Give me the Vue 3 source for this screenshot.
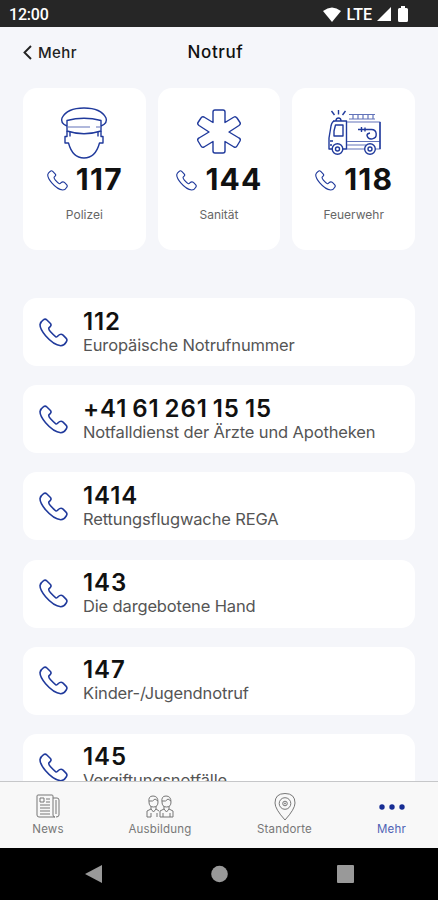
<template>
  <div class="screen">
    <div class="status-bar">
      <span class="time">12:00</span>
      <div class="status-icons">
        <svg class="wifi" width="18" height="15" viewBox="0 0 18 15">
          <path d="M0 4Q9-3 18 4L9 15z" fill="#fff" />
        </svg>
        <span class="lte">LTE</span>
        <svg class="signal" width="14" height="14" viewBox="0 0 14 14">
          <path d="M14 0v14H0z" fill="#fff" />
        </svg>
        <svg width="10" height="16" viewBox="0 0 10 16">
          <path d="M3 0h4v2h1.5Q10 2 10 3.500V14.500Q10 16 8.500 16h-7Q0 16 0 14.500v-11Q0 2 1.500 2H3z" fill="#fff" />
        </svg>
      </div>
    </div>

    <header class="header">
      <button class="back">
        <svg width="9" height="15" viewBox="0 0 9 15">
          <path d="M8 1L1.500 7.500L8 14" fill="none" stroke="#222" stroke-width="1.900" />
        </svg>
        <span>Mehr</span>
      </button>
      <h1>Notruf</h1>
    </header>

    <main class="content">
      <div class="cards">
        <div v-for="card in cards" :key="card.number" class="card">
          <svg v-if="card.icon === 'police'" class="card-icon" width="54" height="54" viewBox="0 0 54 54">
            <path d="M10 21Q3 18 5 13Q10 3 27 3T49 13Q51 18 44 21" />
            <path d="M10 15.500Q27 11 44 15.500V26Q27 31.500 10 26z" />
            <path class="thin" d="M11 22H33M39 22H43" />
            <path d="M10 26V31.500H8V38H11.500Q15.500 53 27 53T42.500 38H46V31.500H44V26" />
            <path d="M13 27V31.500M41 27V31.500" />
          </svg>
          <svg v-else-if="card.icon === 'medical'" class="card-icon" width="54" height="54" viewBox="0 0 54 54">
            <path
              d="M23 5H31Q33 5 33 7V17.500L42 12Q43.500 11 45 13L48 17.500Q49 19 47 20.500L37 27L47 33Q49 34 48 36L45 41Q44 43 42 42L33 36.500V46Q33 48 31 48H23Q21 48 21 46V36.500L12 42Q10 43 9 41L6 36Q5 34 7 33L17 27L7 20.500Q5 19 6 17.500L9 13Q10 11 12 12L21 17.500V7Q21 5 23 5z"
            />
          </svg>
          <svg v-else class="card-icon" width="54" height="54" viewBox="0 0 54 54">
            <path d="M11.500 5V9.500M4.500 6L7.500 10M18.500 6L15.500 10M9 16Q9 13 11.500 13T14 16" />
            <path d="M6 16H19.500V44H15.500M5 44H2V33L4 21Q5 16 8 16M8.500 20H16V31H7V26zM3 36H6M3 40H5" />
            <path class="thin" d="M20 17H53V44H48.500M37.500 44H20M20 36.500H53M20 40H39M22 9.500H48M22 14H48M26 10V14M31 10V14M36 10V14M41 10V14M46 10V14" />
            <path d="M53 17V44M31 24.500H44.500A4.700 4.700 0 1 1 40 30.500Q40 28.500 43 28M34.500 22V27M38 22.500V26.500" />
            <circle cx="10.500" cy="44" r="5.300" />
            <circle cx="10.500" cy="44" r="2" />
            <circle cx="43" cy="44" r="5.300" />
            <circle cx="43" cy="44" r="2" />
          </svg>
          <div class="card-number">
            <svg class="phone" width="21" height="21" viewBox="0 0 88 88">
              <path :d="phonePath" />
            </svg>
            <span>{{ card.number }}</span>
          </div>
          <div class="card-label">{{ card.label }}</div>
        </div>
      </div>

      <div class="list">
        <div v-for="item in contacts" :key="item.number" class="row">
          <svg class="phone" width="29" height="29" viewBox="0 0 88 88">
            <path :d="phonePath" />
          </svg>
          <div>
            <div class="row-number">{{ item.number }}</div>
            <div class="row-label">{{ item.label }}</div>
          </div>
        </div>
      </div>
    </main>

    <nav class="tabs">
      <div class="tab news">
        <svg width="25" height="28" viewBox="0 0 25 28">
          <path d="M1 3Q1 2 2 2H16Q17 2 17 3V22Q17 24 19 24H3Q1 24 1 22zM17 5H21Q23 5 23 7V22Q23 24 20 24M20 7V21M4 5H8V9H4zM10 6H14M10 9H14M4 12H14M4 15H14M4 18H14M4 21H14" />
        </svg>
        <span>News</span>
      </div>
      <div class="tab ausbildung">
        <svg width="28" height="28" viewBox="0 0 28 28">
          <path d="M3 9Q2 3 7 3T12 9Q12 14 7.500 14T3 9M3 8Q7 9 9 6L12 8M5 13V16L1 18V24H5M10 13V16L13 18M5 16L7.500 19L10 16M5 24V20M11 24V20M16 9Q15 3 20 3T25 9Q25 14 20.500 14T16 9M16 8Q20 9 22 6L25 8M18 13V16L14 18V24H27V18L23 16V13M18 16L20.500 19L23 16M17 24V20M24 24V20" />
        </svg>
        <span>Ausbildung</span>
      </div>
      <div class="tab standorte">
        <svg width="22" height="28" viewBox="0 0 22 28">
          <path d="M11 27Q1 16 1 10Q1 .5 11 .5T21 10Q21 16 11 27z" />
          <circle cx="11" cy="10.500" r="5.800" />
          <circle cx="11" cy="10.500" r="2.300" />
          <circle cx="11" cy="10.500" r=".6" />
        </svg>
        <span>Standorte</span>
      </div>
      <div class="tab mehr active">
        <svg width="28" height="28" viewBox="0 0 28 28">
          <circle cx="4" cy="14" r="2.700" />
          <circle cx="14" cy="14" r="2.700" />
          <circle cx="24" cy="14" r="2.700" />
        </svg>
        <span>Mehr</span>
      </div>
    </nav>

    <div class="system-nav">
      <svg width="17" height="18" viewBox="0 0 17 18"><path d="M17 0V18L0 9z" /></svg>
      <svg width="17" height="18" viewBox="0 0 17 18"><circle cx="8.500" cy="9" r="8.300" /></svg>
      <svg width="17" height="18" viewBox="0 0 17 18"><rect width="17" height="18" rx="1" /></svg>
    </div>
  </div>
</template>

<script setup>
import { ref } from 'vue'

const phonePath =
  'M14 5Q19 1 24 6L34 16Q39 21 34 26L30 30Q28 34 35 42Q44 52 51 57Q54 59 58 54Q66 46 73 52L82 61Q87 66 83 72Q76 84 66 84Q44 82 20 54Q3 34 3 20Q4 12 14 5z'

const cards = ref([
  { icon: 'police', number: '117', label: 'Polizei' },
  { icon: 'medical', number: '144', label: 'Sanität' },
  { icon: 'fire', number: '118', label: 'Feuerwehr' }
])

const contacts = ref([
  { number: '112', label: 'Europäische Notrufnummer' },
  { number: '+41 61 261 15 15', label: 'Notfalldienst der Ärzte und Apotheken' },
  { number: '1414', label: 'Rettungsflugwache REGA' },
  { number: '143', label: 'Die dargebotene Hand' },
  { number: '147', label: 'Kinder-/Jugendnotruf' },
  { number: '145', label: 'Vergiftungsnotfälle' }
])
</script>

<style>
body {
  margin: 0;
}
</style>

<style scoped>
.screen {
  width: 438px;
  height: 900px;
  display: flex;
  flex-direction: column;
  overflow: hidden;
  background: #f5f6fa;
  color: #111;
  font-family: Inter, 'Liberation Sans', sans-serif;
}

.status-bar {
  height: 27px;
  flex: none;
  display: flex;
  align-items: center;
  justify-content: space-between;
  box-sizing: border-box;
  padding: 1px 30px 0 9px;
  background: #262626;
  color: #fff;
  font-family: Roboto, sans-serif;
  font-size: 16px;
  font-weight: 500;
}

.time {
  letter-spacing: -0.2px;
}

.status-icons {
  display: flex;
  align-items: center;
}

.wifi {
  margin-right: 6px;
}

.lte {
  margin-right: 5px;
}

.signal {
  margin-right: 7px;
}

.header {
  height: 61px;
  flex: none;
  display: grid;
  grid-template-columns: 1fr auto 1fr;
  align-items: center;
  box-sizing: border-box;
  padding: 0 30px 11px 23px;
}

.back {
  display: flex;
  align-items: center;
  gap: 6px;
  padding: 0;
  border: none;
  background: none;
  color: #222;
  font: 500 15px Inter, sans-serif;
  letter-spacing: 0.4px;
}

h1 {
  margin: 0;
  font-size: 17px;
  font-weight: 500;
  letter-spacing: 0.6px;
}

.content {
  flex: 1;
  min-height: 0;
  overflow: hidden;
  padding: 0 23px;
}

.cards {
  display: grid;
  grid-template-columns: repeat(3, 1fr);
  gap: 12px;
  margin-bottom: 48px;
}

.card {
  height: 162px;
  display: flex;
  flex-direction: column;
  align-items: center;
  box-sizing: border-box;
  padding-top: 17px;
  border-radius: 14px;
  background: #fff;
}

.card-icon,
.phone {
  flex: none;
  fill: none;
  stroke: #203a9c;
  stroke-width: 1.4;
  stroke-linejoin: round;
}

.phone {
  stroke-width: 4.8;
}

.thin {
  stroke: #6273b9;
  stroke-width: 1.2;
}

.card-number {
  display: flex;
  align-items: center;
  gap: 8px;
  height: 36px;
  margin-top: 2px;
  padding-left: 1px;
  font-size: 30px;
  font-weight: 650;
  letter-spacing: 1.2px;
}

.card-number .phone {
  margin-top: 2px;
}

.card-label {
  margin-top: 10px;
  color: #666;
  font-size: 12px;
  line-height: 16px;
}

.list {
  display: flex;
  flex-direction: column;
  gap: 19.2px;
}

.row {
  height: 68px;
  flex: none;
  display: flex;
  align-items: center;
  gap: 15px;
  box-sizing: border-box;
  padding: 1px 0 0 16px;
  border-radius: 14px;
  background: #fff;
}

.row .phone {
  margin-top: -1px;
}

.row-number {
  font-size: 24px;
  font-weight: 600;
  line-height: 25px;
  letter-spacing: 0.9px;
  word-spacing: -1.9px;
}

.row-label {
  color: #555;
  font-size: 16.5px;
  line-height: 23px;
  letter-spacing: -0.15px;
}

.tabs {
  height: 67px;
  flex: none;
  display: grid;
  grid-template-columns: 96px 128px 121px 93px;
  box-sizing: border-box;
  padding-top: 11px;
  border-top: 1px solid #c6c7c9;
  background: #f8f8f8;
}

.tab {
  display: flex;
  flex-direction: column;
  align-items: center;
  color: #777;
  font-size: 11.500px;
  line-height: 17px;
  letter-spacing: 0.2px;
}

.tab svg {
  fill: none;
  stroke: #777;
  stroke-width: 1;
}

.tab.active {
  color: #4f62b5;
}

.tab.active svg {
  fill: #172d94;
  stroke: none;
}

.system-nav {
  height: 52px;
  flex: none;
  display: flex;
  align-items: center;
  justify-content: center;
  gap: 109px;
  background: #000;
  fill: #999;
}
</style>
